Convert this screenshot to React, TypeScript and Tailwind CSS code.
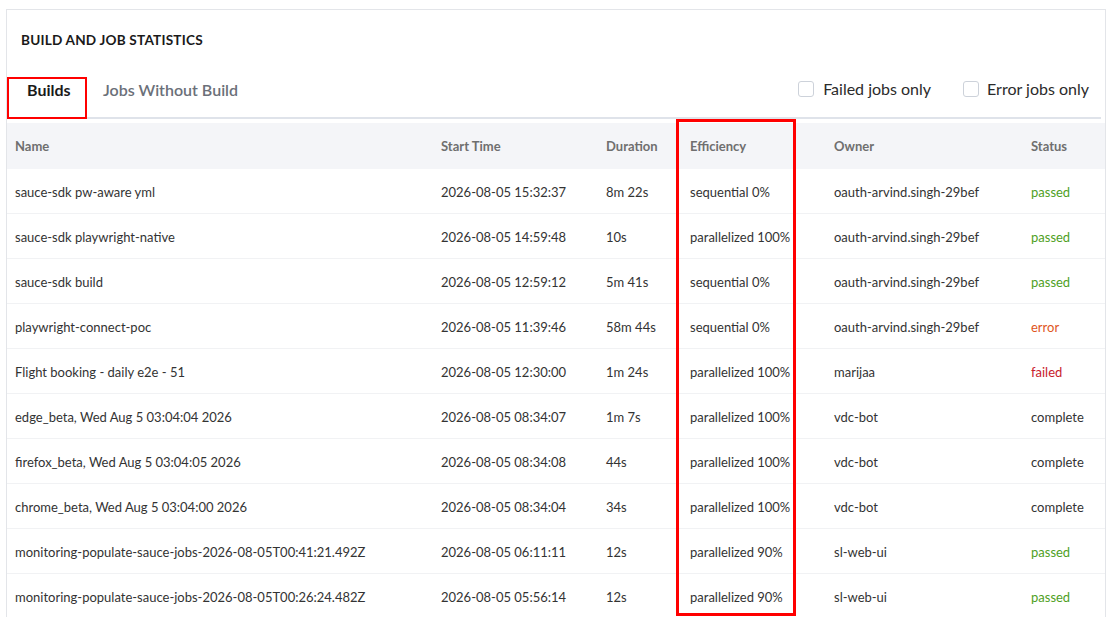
import React from "react";

type Row = {
  name: string;
  start: string;
  duration: string;
  eff: string;
  owner: string;
  status: string;
};

const rows: Row[] = [
  { name: "sauce-sdk pw-aware yml", start: "2026-08-05 15:32:37", duration: "8m 22s", eff: "sequential 0%", owner: "oauth-arvind.singh-29bef", status: "passed" },
  { name: "sauce-sdk playwright-native", start: "2026-08-05 14:59:48", duration: "10s", eff: "parallelized 100%", owner: "oauth-arvind.singh-29bef", status: "passed" },
  { name: "sauce-sdk build", start: "2026-08-05 12:59:12", duration: "5m 41s", eff: "sequential 0%", owner: "oauth-arvind.singh-29bef", status: "passed" },
  { name: "playwright-connect-poc", start: "2026-08-05 11:39:46", duration: "58m 44s", eff: "sequential 0%", owner: "oauth-arvind.singh-29bef", status: "error" },
  { name: "Flight booking - daily e2e - 51", start: "2026-08-05 12:30:00", duration: "1m 24s", eff: "parallelized 100%", owner: "marijaa", status: "failed" },
  { name: "edge_beta, Wed Aug 5 03:04:04 2026", start: "2026-08-05 08:34:07", duration: "1m 7s", eff: "parallelized 100%", owner: "vdc-bot", status: "complete" },
  { name: "firefox_beta, Wed Aug 5 03:04:05 2026", start: "2026-08-05 08:34:08", duration: "44s", eff: "parallelized 100%", owner: "vdc-bot", status: "complete" },
  { name: "chrome_beta, Wed Aug 5 03:04:00 2026", start: "2026-08-05 08:34:04", duration: "34s", eff: "parallelized 100%", owner: "vdc-bot", status: "complete" },
  { name: "monitoring-populate-sauce-jobs-2026-08-05T00:41:21.492Z", start: "2026-08-05 06:11:11", duration: "12s", eff: "parallelized 90%", owner: "sl-web-ui", status: "passed" },
  { name: "monitoring-populate-sauce-jobs-2026-08-05T00:26:24.482Z", start: "2026-08-05 05:56:14", duration: "12s", eff: "parallelized 90%", owner: "sl-web-ui", status: "passed" },
];

function statusClass(s: string) {
  if (s === "passed") return "text-[#4f9f1e]";
  if (s === "error") return "text-[#e0561c]";
  if (s === "failed") return "text-[#c8202b]";
  return "text-[#333333]";
}

const cols = "grid grid-cols-[426px_165px_78px_150px_197px_1fr]";

export default function App() {
  return (
    <div
      className="relative w-[1120px] h-[617px] overflow-hidden bg-white pl-[6px] pt-[9px] pr-[14px]"
      style={{ fontFamily: "Lato, 'Open Sans', sans-serif" }}
    >
      <div className="h-full border border-b-0 border-[#e3e5e9]">
        <div className="pl-[14px] pt-[22px] h-[16px] box-content text-[13.6px] leading-[16px] font-bold text-[#1a1a1a] tracking-[0.2px]">
          BUILD AND JOB STATISTICS
        </div>
        <div className="mt-[29px] mr-[4px] flex h-[42px] border-b-2 border-[#dfe3ea]">
          <div className="-mb-[2px] h-[42px] w-[80px] border-2 border-[#ff0000] pt-[1px] pl-[18px] text-[16px] leading-[20px] font-bold text-[#1a1a1a]">
            Builds
          </div>
          <div className="ml-[16px] pt-[3px] text-[16px] leading-[20px] font-semibold text-[#6b7079]">
            Jobs Without Build
          </div>
          <div className="ml-auto flex items-start pt-[2px] gap-[32px] pr-[12px]">
            <label className="flex items-center gap-[9px] text-[16px] leading-[20px] text-[#2b2b2b]">
              <span className="h-[16px] w-[16px] rounded-[3px] border border-[#cdd2da] bg-white" />
              Failed jobs only
            </label>
            <label className="flex items-center gap-[8px] text-[16px] leading-[20px] text-[#2b2b2b]">
              <span className="h-[16px] w-[16px] rounded-[3px] border border-[#cdd2da] bg-white" />
              Error jobs only
            </label>
          </div>
        </div>
        <div className="mt-[4px]">
          <div className={`${cols} h-[46px] items-center bg-[#f4f5f8] pt-[1px] text-[13px] font-bold text-[#6f6f6f]`}>
            <div className="pl-[8px]">Name</div>
            <div className="pl-[8px]">Start Time</div>
            <div className="pl-[8px]">Duration</div>
            <div className="pl-[14px]">Efficiency</div>
            <div className="pl-[8px]">Owner</div>
            <div className="pl-[8px]">Status</div>
          </div>
          {rows.map((r, i) => (
            <div
              key={i}
              className={`${cols} h-[45px] items-center border-b border-[#f1f2f4] pt-[3px] text-[13px] text-[#333333]`}
            >
              <div className="pl-[8px] whitespace-nowrap">{r.name}</div>
              <div className="pl-[8px] whitespace-nowrap">{r.start}</div>
              <div className="pl-[8px] whitespace-nowrap">{r.duration}</div>
              <div className="pl-[14px] whitespace-nowrap">{r.eff}</div>
              <div className="pl-[8px] whitespace-nowrap">{r.owner}</div>
              <div className={`pl-[8px] whitespace-nowrap ${statusClass(r.status)}`}>{r.status}</div>
            </div>
          ))}
        </div>
      </div>
      <div className="pointer-events-none absolute left-[676px] top-[119px] h-[497px] w-[120px] border-[3px] border-[#ff0000]" />
    </div>
  );
}
